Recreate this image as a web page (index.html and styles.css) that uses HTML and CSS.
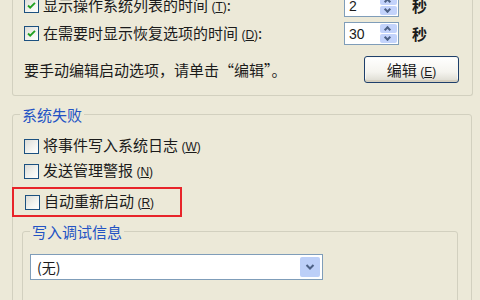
FILE: index.html
```html
<!DOCTYPE html>
<html lang="zh-CN">
<head>
<meta charset="utf-8">
<link rel="stylesheet" href="styles.css">
</head>
<body>
<div class="group group-top">
  <div class="row row-spin">
    <label class="check"><span class="box checked"><svg viewBox="0 0 15 15"><path d="M3.5 7.5 L6 10 L11.5 4.5" fill="none" stroke="#21a121" stroke-width="2.2"/></svg></span><span class="txt">显示操作系统列表的时间 <span class="acc">(<u>T</u>)</span>:</span></label>
    <div class="spin"><span class="val">2</span><span class="btns"><span class="up"></span><span class="dn"></span></span></div>
    <span class="unit">秒</span>
  </div>
  <div class="row row-spin">
    <label class="check"><span class="box checked"><svg viewBox="0 0 15 15"><path d="M3.5 7.5 L6 10 L11.5 4.5" fill="none" stroke="#21a121" stroke-width="2.2"/></svg></span><span class="txt">在需要时显示恢复选项的时间 <span class="acc">(<u>D</u>)</span>:</span></label>
    <div class="spin"><span class="val">30</span><span class="btns"><span class="up"></span><span class="dn"></span></span></div>
    <span class="unit">秒</span>
  </div>
  <div class="row row-edit">
    <span class="txt hint">要手动编辑启动选项，请单击“编辑”。</span>
    <button class="btn">编辑 <span class="acc">(<u>E</u>)</span></button>
  </div>
</div>

<fieldset class="group group-fail">
  <legend>系统失败</legend>
  <div class="row row-cb first"><label class="check"><span class="box"></span><span class="txt">将事件写入系统日志 <span class="acc">(<u>W</u>)</span></span></label></div>
  <div class="row row-cb"><label class="check"><span class="box"></span><span class="txt">发送管理警报 <span class="acc">(<u>N</u>)</span></span></label></div>
  <div class="highlight"><label class="check"><span class="box"></span><span class="txt">自动重新启动 <span class="acc">(<u>R</u>)</span></span></label></div>
  <fieldset class="group group-debug">
    <legend>写入调试信息</legend>
    <div class="select"><span class="sel-val">(无)</span><span class="sel-btn"><svg viewBox="0 0 10 8"><path d="M1.5 2 L5 5.5 L8.5 2" fill="none" stroke="#4d6185" stroke-width="2"/></svg></span></div>
  </fieldset>
</fieldset>
</body>
</html>
```
FILE: styles.css
```css
html, body {
  margin: 0;
  padding: 0;
  width: 480px;
  height: 300px;
  overflow: hidden;
  background: #ece9d8;
  font-family: "Noto Sans CJK SC", "Liberation Sans", sans-serif;
  font-size: 15px;
  color: #1b1b1b;
}

.group {
  border: 1px solid #d2d0bf;
  border-radius: 3px;
  box-sizing: border-box;
}

.group-top {
  margin: -6px 8px 0 12px;
  border-top: none;
  border-radius: 0 0 3px 3px;
  padding: 0 0 12px 11px;
  width: 461px;
}

.row {
  display: flex;
  align-items: center;
}

.row-spin {
  height: 23px;
  margin-bottom: 5px;
  padding-right: 45px;
}

.row-edit {
  height: 27px;
  margin-top: 11px;
  padding-right: 13px;
}

.check {
  display: flex;
  align-items: center;
  flex: 1;
}

.box {
  width: 13px;
  height: 13px;
  border: 1px solid #1c5180;
  background: linear-gradient(135deg, #dcdcd7 0%, #f4f4f0 60%, #ffffff 100%);
  display: inline-flex;
  flex-shrink: 0;
}

.box svg {
  width: 13px;
  height: 13px;
}

.txt {
  margin-left: 4px;
  line-height: 18px;
  white-space: nowrap;
}

.hint {
  margin-left: 0;
  flex: 1;
}

.acc {
  font-size: 12px;
  font-family: "Liberation Sans", sans-serif;
}

.spin {
  width: 55px;
  height: 23px;
  box-sizing: border-box;
  border: 1px solid #7f9db9;
  background: #fff;
  display: flex;
  align-items: center;
  justify-content: space-between;
  padding: 1px;
}

.val {
  font-family: "Liberation Sans", sans-serif;
  font-size: 14px;
  padding-left: 3px;
}

.btns {
  width: 17px;
  height: 19px;
  display: flex;
  flex-direction: column;
  gap: 1px;
}

.btns span {
  flex: 1;
  background: #c3d3fb;
  border-radius: 2px;
  position: relative;
}

.btns span::after {
  content: "";
  position: absolute;
  left: 5px;
  width: 5px;
  height: 5px;
  border-left: 2px solid #4d6185;
  border-top: 2px solid #4d6185;
  box-sizing: border-box;
}

.btns .up::after {
  top: 3px;
  transform: rotate(45deg);
}

.btns .dn::after {
  top: 1px;
  transform: rotate(225deg);
}

.unit {
  margin-left: 13px;
  width: 15px;
  font-weight: bold;
}

.btn {
  width: 95px;
  height: 27px;
  border: 1px solid #1e3f6b;
  border-radius: 3px;
  background: linear-gradient(#ffffff 0%, #f5f4ef 60%, #dcdad0 100%);
  box-shadow: inset 0 -2px 0 #d6d0c0, inset 0 0 0 1px #f8f8f4;
  font-family: "Noto Sans CJK SC", sans-serif;
  font-size: 15px;
  color: #1b1b1b;
  padding: 0;
}

fieldset.group {
  margin: 0;
  padding: 0;
  min-width: 0;
}

legend {
  color: #2353c4;
  font-size: 15px;
  line-height: 15px;
  padding: 0 2px;
  margin-left: 7px;
}

.group-fail {
  margin: 11px 8px 0 12px !important;
  width: 460px;
  height: 260px;
}

.row-cb {
  height: 22px;
  padding-left: 11px;
  margin-top: 3px;
}

.row-cb.first {
  margin-top: 13px;
}

.highlight {
  margin: 5px 0 0 -1px;
  width: 170px;
  height: 30px;
  box-sizing: border-box;
  border: 2px solid #e8242a;
  padding-left: 11px;
  display: flex;
  align-items: center;
}

.group-debug {
  margin: 7px 13px 0 9px !important;
  height: 100px;
}

.select {
  margin: 15px 0 0 7px;
  width: 293px;
  height: 26px;
  box-sizing: border-box;
  border: 1px solid #7f9db9;
  background: #fff;
  display: flex;
  align-items: center;
  justify-content: space-between;
  padding: 2px;
}

.sel-val {
  font-size: 14px;
  padding-left: 4px;
}

.sel-btn {
  width: 20px;
  height: 20px;
  background: #bccff8;
  border-radius: 2px;
  display: flex;
  align-items: center;
  justify-content: center;
}

.sel-btn svg {
  width: 10px;
  height: 8px;
}
```
